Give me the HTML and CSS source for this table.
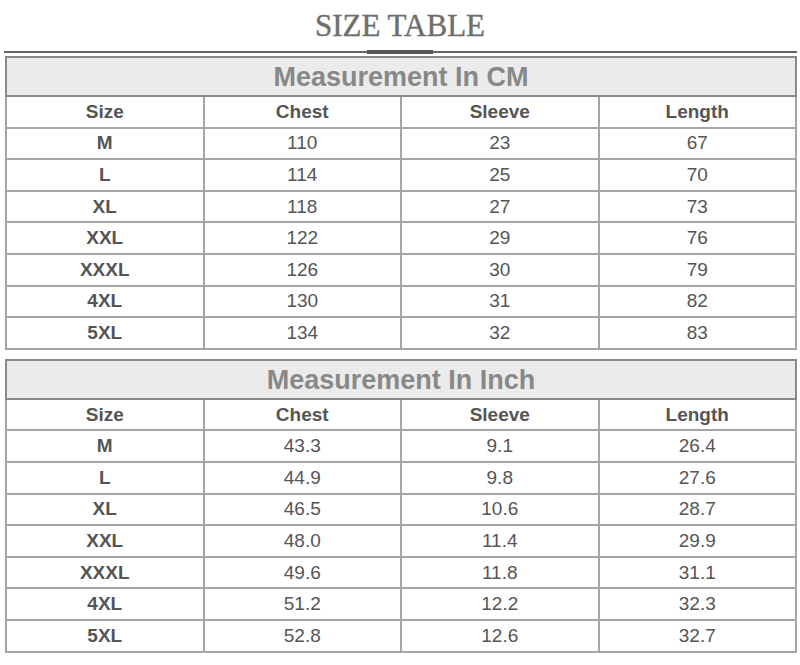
FILE: index.html
```html
<!DOCTYPE html>
<html>
<head>
<meta charset="utf-8">
<link rel="stylesheet" href="styles.css">
</head>
<body>
<div class="page">
  <h1 class="title">SIZE TABLE</h1>
  <div class="rule"></div>
  <table class="size-table">
    <tr class="caption-row"><th colspan="4">Measurement In CM</th></tr>
    <tr class="head-row"><th>Size</th><th>Chest</th><th>Sleeve</th><th>Length</th></tr>
    <tr><th>M</th><td>110</td><td>23</td><td>67</td></tr>
    <tr><th>L</th><td>114</td><td>25</td><td>70</td></tr>
    <tr><th>XL</th><td>118</td><td>27</td><td>73</td></tr>
    <tr><th>XXL</th><td>122</td><td>29</td><td>76</td></tr>
    <tr><th>XXXL</th><td>126</td><td>30</td><td>79</td></tr>
    <tr><th>4XL</th><td>130</td><td>31</td><td>82</td></tr>
    <tr><th>5XL</th><td>134</td><td>32</td><td>83</td></tr>
  </table>
  <table class="size-table">
    <tr class="caption-row"><th colspan="4">Measurement In Inch</th></tr>
    <tr class="head-row"><th>Size</th><th>Chest</th><th>Sleeve</th><th>Length</th></tr>
    <tr><th>M</th><td>43.3</td><td>9.1</td><td>26.4</td></tr>
    <tr><th>L</th><td>44.9</td><td>9.8</td><td>27.6</td></tr>
    <tr><th>XL</th><td>46.5</td><td>10.6</td><td>28.7</td></tr>
    <tr><th>XXL</th><td>48.0</td><td>11.4</td><td>29.9</td></tr>
    <tr><th>XXXL</th><td>49.6</td><td>11.8</td><td>31.1</td></tr>
    <tr><th>4XL</th><td>51.2</td><td>12.2</td><td>32.3</td></tr>
    <tr><th>5XL</th><td>52.8</td><td>12.6</td><td>32.7</td></tr>
  </table>
</div>
</body>
</html>
```
FILE: styles.css
```css
html, body {
  margin: 0;
  padding: 0;
  background: #fff;
}
.page {
  width: 800px;
  padding-top: 8px;
}
.title {
  margin: 0;
  height: 43px;
  font-family: "Liberation Serif", "Times New Roman", serif;
  font-weight: normal;
  font-size: 31px;
  line-height: 36px;
  color: #6e6e6e;
  -webkit-text-stroke: 0.4px #6e6e6e;
  text-align: center;
}
.rule {
  position: relative;
  height: 2px;
  margin: 0 3px 0 4px;
  background: #666;
}
.rule::after {
  content: "";
  position: absolute;
  left: 363px;
  top: -1px;
  width: 66px;
  height: 4px;
  background: #555;
}
.size-table {
  width: 792px;
  margin: 3px 0 0 5px;
  border-collapse: collapse;
  table-layout: fixed;
  border: 2px solid #8a8a8a;
  font-family: "Liberation Sans", Arial, sans-serif;
  color: #555;
}
.size-table + .size-table {
  margin-top: 9px;
}
.size-table th,
.size-table td {
  border: 2px solid #a5a5a5;
  text-align: center;
  padding: 0;
  height: 29.6px;
  font-size: 19px;
}
.size-table th {
  font-weight: bold;
}
.size-table td {
  font-weight: normal;
}
.size-table .caption-row th {
  height: 35px;
  background: #ebebeb;
  color: #888;
  font-size: 27px;
  border-color: #8a8a8a;
  padding-top: 2px;
}
```
